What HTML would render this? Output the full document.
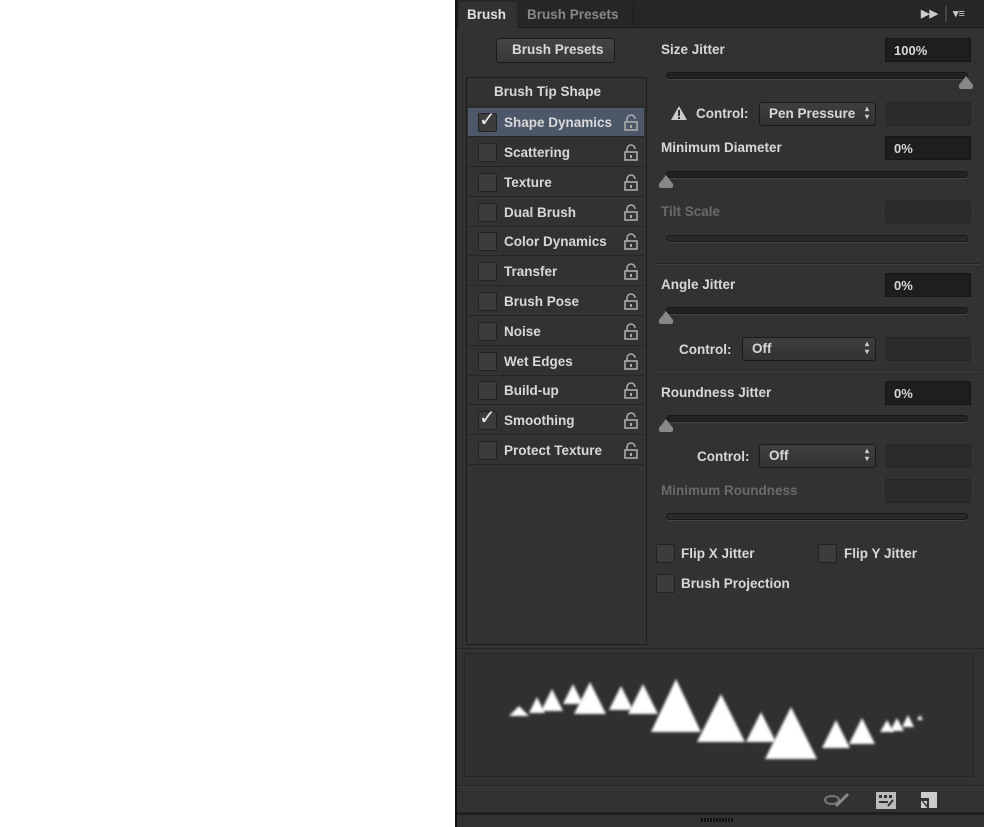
<!DOCTYPE html><html><head><style>
*{margin:0;padding:0;box-sizing:border-box}
body{width:984px;height:827px;background:#fff;position:relative;overflow:hidden;font-family:"Liberation Sans",sans-serif;font-size:13.5px;font-weight:bold;color:#d8d8d8}
.a{position:absolute}
.lbl{position:absolute;white-space:nowrap;line-height:16px}
.dim{color:#6a6a6a}
.inp{position:absolute;background:#1e1e1e;border:1px solid #161616;height:24px;font-size:13px;padding:4px 0 0 8px;color:#d8d8d8}
.inpd{position:absolute;background:#2b2b2b;border:1px solid #262626;height:24px}
.trk{position:absolute;left:666px;width:302px;height:7px;border-radius:4px;background:#222;border:1px solid #181818;box-shadow:0 1px 0 #444}
.th{position:absolute;width:0;height:0;border-left:7px solid transparent;border-right:7px solid transparent;border-bottom:9px solid #888}
.thb{position:absolute;width:14px;height:4px;background:#888;border-radius:0 0 2px 2px}
.dd{position:absolute;height:24px;background:linear-gradient(#3e3e3e,#333);border:1px solid #1a1a1a;border-radius:3px;padding:3px 0 0 9px;font-size:13.5px}
.dd:after{content:"\25B4\A\25BE";white-space:pre;position:absolute;right:6px;top:2px;font-size:8px;line-height:8px;color:#ccc}
.row{position:absolute;left:468px;width:176px;height:29px;border-bottom:1px solid #262626}
.cb{position:absolute;left:10px;top:5px;width:19px;height:19px;background:#3c3c3c;border:1px solid #222;border-radius:2px}
.row .t{position:absolute;left:36px;top:7px;white-space:nowrap}
.lk{position:absolute;left:156px;top:6px;width:14px;height:17px}
.sep{position:absolute;left:655px;width:325px;height:2px;border-top:1px solid #262626;border-bottom:1px solid #3f3f3f}
.tri{position:absolute;width:0;height:0;border-left-style:solid;border-right-style:solid;border-left-color:transparent;border-right-color:transparent;border-bottom-style:solid;border-bottom-color:#fff;filter:blur(1.2px)}
</style></head><body>
<div class="a" style="left:455px;top:0;width:529px;height:827px;background:#323232;border-left:2px solid #111"></div>
<div class="a" style="left:457px;top:0;width:527px;height:28px;background:#262626;border-bottom:1px solid #1a1a1a"></div>
<div class="a" style="left:459px;top:2px;width:58px;height:27px;background:#323232"></div>
<div class="lbl" style="left:467px;top:7px;color:#e0e0e0">Brush</div>
<div class="a" style="left:517px;top:2px;width:117px;height:26px;border-right:1px solid #1a1a1a"></div>
<div class="lbl" style="left:527px;top:7px;color:#888">Brush Presets</div>
<div class="lbl" style="left:921px;top:6px;font-size:11px;color:#ccc">▶▶</div>
<div class="a" style="left:945px;top:6px;width:2px;height:16px;background:#444"></div>
<div class="lbl" style="left:953px;top:6px;font-size:11px;color:#ccc">▾≡</div>

<div class="a" style="left:496px;top:38px;width:119px;height:25px;background:linear-gradient(#444,#383838);border:1px solid #1a1a1a;border-radius:3px"></div>
<div class="lbl" style="left:512px;top:42px">Brush Presets</div>

<div class="a" style="left:466px;top:77px;width:181px;height:568px;border:1px solid #1c1c1c;background:#323232"></div>
<div class="row" style="top:78px;height:29px"><span class="t" style="left:26px;top:6px">Brush Tip Shape</span></div>
<div class="a" style="left:468px;top:108px;width:176px;height:29px;background:#4d576a"></div>
<div class="row" style="top:108px"><div class="cb"></div><span class="a" style="left:11px;top:-1px;font-size:20px;color:#eee;font-weight:normal">✓</span><span class="t">Shape Dynamics</span><svg class="lk" viewBox="0 0 14 17"><path d="M3 8V5a4 4 0 0 1 8 0" fill="none" stroke="#aaa" stroke-width="1.6"/><rect x="1" y="8" width="12" height="8" fill="none" stroke="#aaa" stroke-width="1.6"/><rect x="6" y="11" width="2" height="3" fill="#aaa"/></svg></div>
<div id="rows"></div>
<script>
var n=["Scattering","Texture","Dual Brush","Color Dynamics","Transfer","Brush Pose","Noise","Wet Edges","Build-up","Smoothing","Protect Texture"];
var h="";n.forEach(function(s,i){var t=138+i*29.8;h+='<div class="row" style="top:'+t+'px"><div class="cb"></div>'+(s=="Smoothing"?'<span class="a" style="left:11px;top:-1px;font-size:20px;color:#eee;font-weight:normal">✓</span>':'')+'<span class="t">'+s+'</span><svg class="lk" viewBox="0 0 14 17"><path d="M3 8V5a4 4 0 0 1 8 0" fill="none" stroke="#aaa" stroke-width="1.6"/><rect x="1" y="8" width="12" height="8" fill="none" stroke="#aaa" stroke-width="1.6"/><rect x="6" y="11" width="2" height="3" fill="#aaa"/></svg></div>';});
document.getElementById("rows").outerHTML=h;
</script>

<div class="lbl" style="left:661px;top:42px">Size Jitter</div>
<div class="inp" style="left:885px;top:38px;width:86px">100%</div>
<div class="trk" style="top:72px"></div>
<div class="th" style="left:959px;top:76px"></div><div class="thb" style="left:959px;top:85px"></div>
<svg class="a" style="left:670px;top:105px" width="18" height="16"><path d="M9 1L17 15H1Z" fill="#ccc"/><rect x="8" y="5" width="2" height="6" fill="#323232"/><rect x="8" y="12" width="2" height="2" fill="#323232"/></svg>
<div class="lbl" style="left:696px;top:106px">Control:</div>
<div class="dd" style="left:759px;top:102px;width:117px">Pen Pressure</div>
<div class="inpd" style="left:886px;top:102px;width:85px"></div>
<div class="lbl" style="left:661px;top:140px">Minimum Diameter</div>
<div class="inp" style="left:885px;top:136px;width:86px">0%</div>
<div class="trk" style="top:171px"></div>
<div class="th" style="left:659px;top:175px"></div><div class="thb" style="left:659px;top:184px"></div>
<div class="lbl dim" style="left:661px;top:204px">Tilt Scale</div>
<div class="inpd" style="left:885px;top:200px;width:86px"></div>
<div class="trk" style="top:235px;background:#2a2a2a"></div>
<div class="sep" style="top:263px"></div>
<div class="lbl" style="left:661px;top:277px">Angle Jitter</div>
<div class="inp" style="left:885px;top:273px;width:86px">0%</div>
<div class="trk" style="top:307px"></div>
<div class="th" style="left:659px;top:311px"></div><div class="thb" style="left:659px;top:320px"></div>
<div class="lbl" style="left:679px;top:342px">Control:</div>
<div class="dd" style="left:742px;top:337px;width:134px">Off</div>
<div class="inpd" style="left:886px;top:337px;width:85px"></div>
<div class="sep" style="top:370px"></div>
<div class="lbl" style="left:661px;top:385px">Roundness Jitter</div>
<div class="inp" style="left:885px;top:381px;width:86px">0%</div>
<div class="trk" style="top:415px"></div>
<div class="th" style="left:659px;top:419px"></div><div class="thb" style="left:659px;top:428px"></div>
<div class="lbl" style="left:697px;top:449px">Control:</div>
<div class="dd" style="left:759px;top:444px;width:117px">Off</div>
<div class="inpd" style="left:886px;top:444px;width:85px"></div>
<div class="lbl dim" style="left:661px;top:483px">Minimum Roundness</div>
<div class="inpd" style="left:885px;top:479px;width:86px"></div>
<div class="trk" style="top:513px;background:#2a2a2a"></div>
<div class="cb" style="left:656px;top:544px"></div><div class="lbl" style="left:681px;top:546px">Flip X Jitter</div>
<div class="cb" style="left:818px;top:544px"></div><div class="lbl" style="left:844px;top:546px">Flip Y Jitter</div>
<div class="cb" style="left:656px;top:574px"></div><div class="lbl" style="left:681px;top:576px">Brush Projection</div>

<div class="a" style="left:457px;top:648px;width:527px;height:1px;background:#262626"></div>
<div class="a" style="left:464px;top:653px;width:510px;height:124px;border:1px solid #262626;background:#303030;overflow:hidden">
<div class="tri" style="left:44px;top:52px;border-left-width:10px;border-right-width:10px;border-bottom-width:10px"></div>
<div class="tri" style="left:64px;top:43px;border-left-width:8px;border-right-width:8px;border-bottom-width:16px"></div>
<div class="tri" style="left:76px;top:35px;border-left-width:11px;border-right-width:11px;border-bottom-width:22px"></div>
<div class="tri" style="left:98px;top:30px;border-left-width:10px;border-right-width:10px;border-bottom-width:20px"></div>
<div class="tri" style="left:109px;top:28px;border-left-width:16px;border-right-width:16px;border-bottom-width:32px"></div>
<div class="tri" style="left:144px;top:32px;border-left-width:12px;border-right-width:12px;border-bottom-width:24px"></div>
<div class="tri" style="left:163px;top:30px;border-left-width:15px;border-right-width:15px;border-bottom-width:30px"></div>
<div class="tri" style="left:186px;top:25px;border-left-width:25px;border-right-width:25px;border-bottom-width:53px"></div>
<div class="tri" style="left:232px;top:40px;border-left-width:24px;border-right-width:24px;border-bottom-width:48px"></div>
<div class="tri" style="left:281px;top:58px;border-left-width:15px;border-right-width:15px;border-bottom-width:30px"></div>
<div class="tri" style="left:300px;top:53px;border-left-width:26px;border-right-width:26px;border-bottom-width:52px"></div>
<div class="tri" style="left:357px;top:66px;border-left-width:14px;border-right-width:14px;border-bottom-width:28px"></div>
<div class="tri" style="left:384px;top:64px;border-left-width:13px;border-right-width:13px;border-bottom-width:26px"></div>
<div class="tri" style="left:415px;top:66px;border-left-width:7px;border-right-width:7px;border-bottom-width:12px"></div>
<div class="tri" style="left:425px;top:64px;border-left-width:7px;border-right-width:7px;border-bottom-width:13px"></div>
<div class="tri" style="left:437px;top:61px;border-left-width:6px;border-right-width:6px;border-bottom-width:12px"></div>
<div class="tri" style="left:452px;top:61px;border-left-width:3px;border-right-width:3px;border-bottom-width:5px"></div>
</div>
<div class="a" style="left:457px;top:785px;width:527px;height:2px;border-top:1px solid #262626;border-bottom:1px solid #3a3a3a"></div>
<svg class="a" style="left:822px;top:792px" width="30" height="18"><ellipse cx="10" cy="8" rx="7" ry="4" fill="none" stroke="#777" stroke-width="2"/><path d="M14 14L26 2" stroke="#888" stroke-width="3"/></svg>
<svg class="a" style="left:876px;top:792px" width="20" height="17"><rect x="0" y="0" width="20" height="17" fill="#bbb"/><rect x="3" y="3" width="3" height="3" fill="#333"/><rect x="8" y="3" width="3" height="3" fill="#333"/><rect x="13" y="3" width="3" height="3" fill="#333"/><rect x="3" y="9" width="9" height="2" fill="#333"/><path d="M12 14L17 8" stroke="#333" stroke-width="2"/></svg>
<svg class="a" style="left:919px;top:792px" width="18" height="18"><rect x="2" y="0" width="16" height="16" fill="#ccc"/><path d="M0 6H10V18Z" fill="#323232"/><path d="M4 9H8V13Z" fill="#ccc"/></svg>
<div class="a" style="left:457px;top:812px;width:527px;height:3px;background:#1f1f1f"></div>
<div class="a" style="left:701px;top:818px;width:32px;height:4px;background:repeating-linear-gradient(90deg,#111 0 2px,#3a3a3a 2px 3px)"></div>
</body></html>
